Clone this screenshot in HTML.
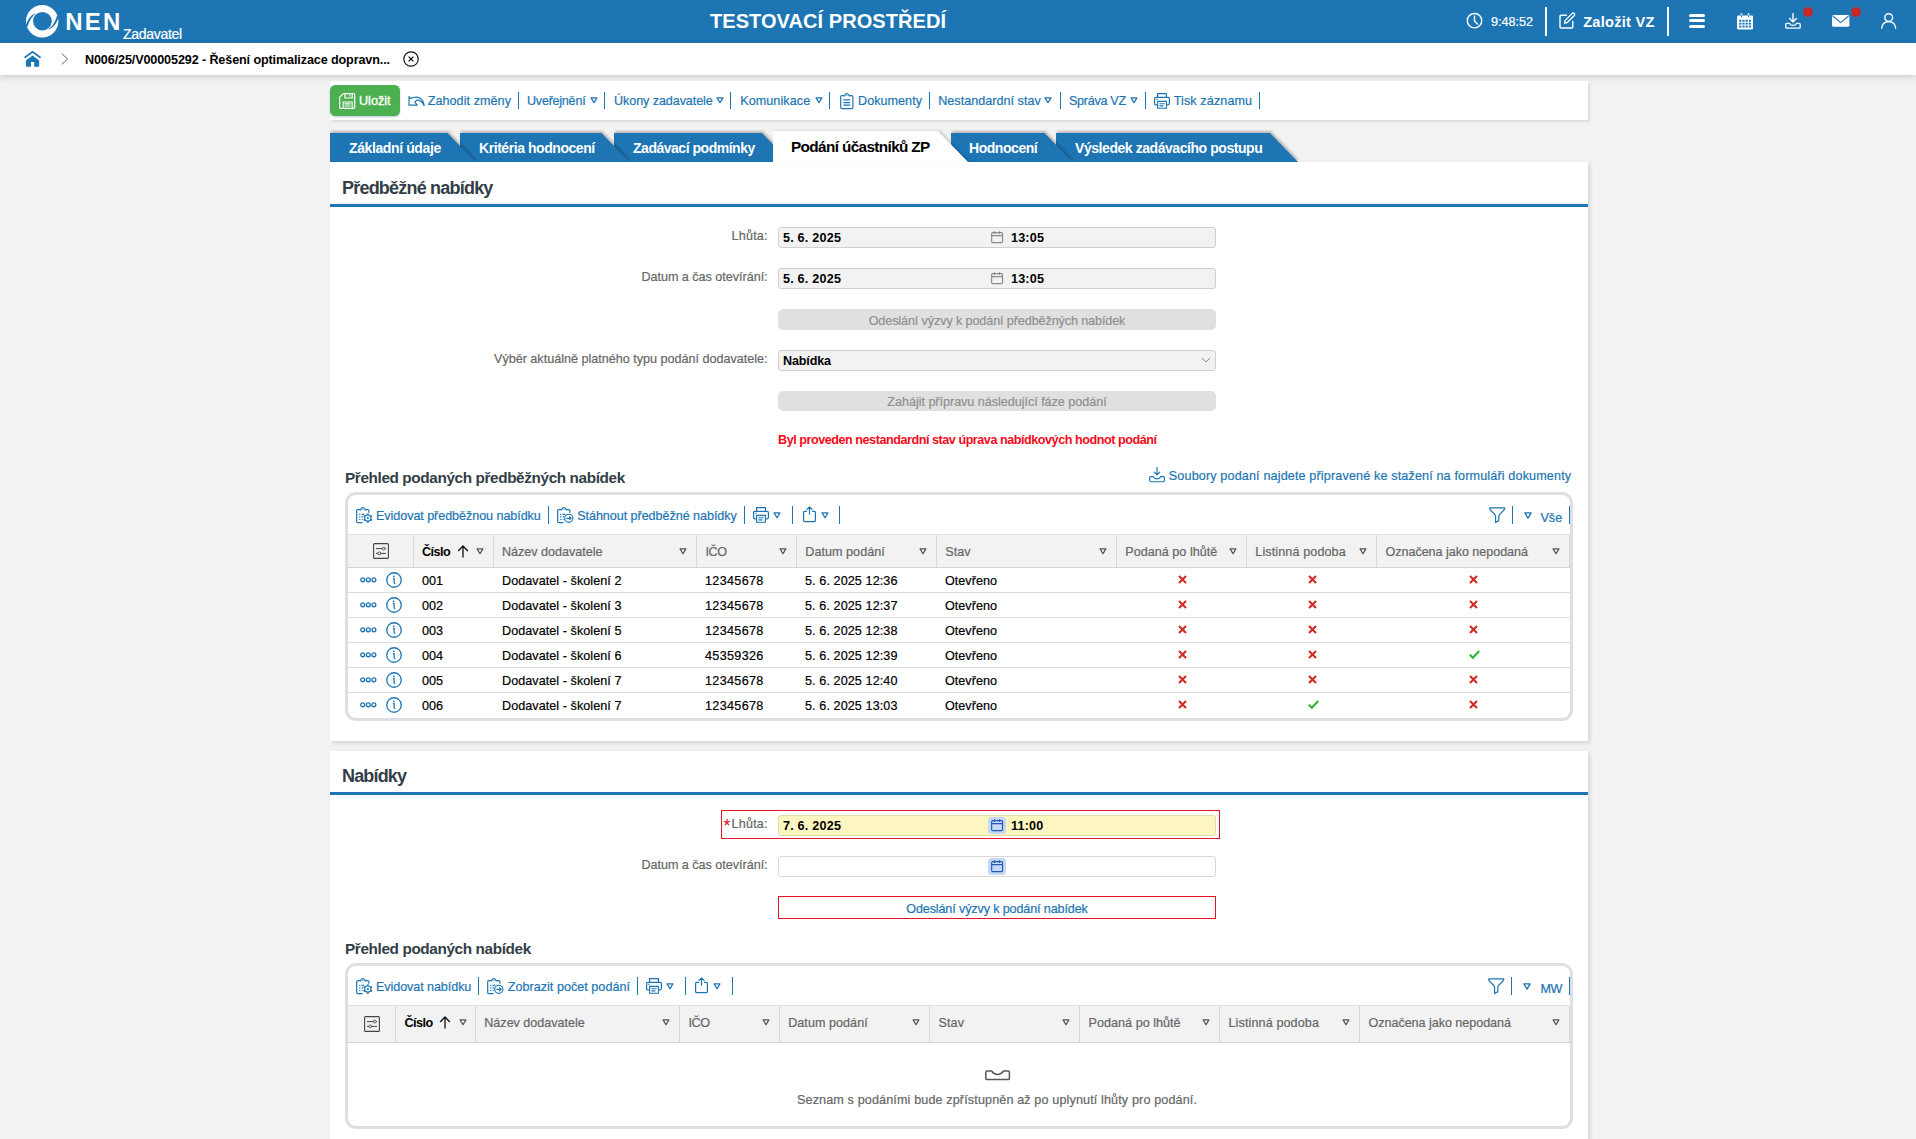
<!DOCTYPE html>
<html lang="cs"><head><meta charset="utf-8"><title>NEN - Zadavatel</title>
<style>
html,body{margin:0;padding:0}
body{width:1916px;height:1139px;overflow:hidden;background:#f2f2f2;position:relative;font-family:"Liberation Sans",Arial,sans-serif;font-size:13px}
div,svg,span{position:absolute;box-sizing:border-box}
span{white-space:pre;line-height:1}
svg{overflow:visible}
</style></head>
<body>
<header>
<div style="left:0px;top:0px;width:1916px;height:43px;background:#1d75b4"></div>
<svg style="left:25.8px;top:4.8px" width="32.4" height="32.4" viewBox="0 0 32.4 32.4" ><circle cx="16.2" cy="16.2" r="16.2" fill="#fff"/><circle cx="16.4" cy="16.2" r="9.3" fill="#1d75b4"/><path d="M-0.3 21.2 C1.6 13.6 5.6 9.2 10.6 7.9 C6.6 10.6 3.6 14.8 1.6 21.6 Z" fill="#1d75b4"/><path d="M-0.3 21.2 C1.6 13.6 5.6 9.2 10.6 7.9 C6.6 10.6 3.6 14.8 1.6 21.6 Z" fill="#1d75b4" transform="rotate(180 16.3 16.2)"/></svg>
<span style="left:65.30px;top:10px;font-size:24px;color:#fff;font-weight:700;letter-spacing:2.200px;">NEN</span>
<span style="left:123px;top:27px;font-size:14px;color:#fff;letter-spacing:-0.292px;-webkit-text-stroke:0.2px #fff;">Zadavatel</span>
<span style="left:710px;top:11px;font-size:20px;color:#fff;font-weight:700;letter-spacing:0.062px;">TESTOVACÍ PROSTŘEDÍ</span>
<svg style="left:1466px;top:12px" width="17" height="17" viewBox="0 0 17 17" ><circle cx="8.5" cy="8.7" r="7.2" fill="none" stroke="#fff" stroke-width="1.4"/><path d="M8.5 4.3 V9 L11.3 12" fill="none" stroke="#fff" stroke-width="1.4" stroke-linecap="round"/></svg>
<span style="left:1491px;top:16px;font-size:12.6px;color:#fff;letter-spacing:-0.005px;-webkit-text-stroke:0.2px #fff;">9:48:52</span>
<div style="left:1545px;top:7px;width:2.2px;height:29px;background:#fff"></div>
<svg style="left:1559px;top:12px" width="17" height="17" viewBox="0 0 17 17" ><path d="M8 3.2 H2.2 Q1 3.2 1 4.4 V14.8 Q1 16 2.2 16 H12.6 Q13.8 16 13.8 14.8 V9" fill="none" stroke="#fff" stroke-width="1.4"/><path d="M6.2 8.4 L13.2 1.4 Q14.2 0.6 15.2 1.5 Q16.2 2.5 15.3 3.5 L8.3 10.5 L5.6 11.2 Z" fill="none" stroke="#fff" stroke-width="1.3" stroke-linejoin="round"/></svg>
<span style="left:1583.20px;top:15px;font-size:14.6px;color:#fff;font-weight:700;letter-spacing:0.250px;">Založit VZ</span>
<div style="left:1666.8px;top:7px;width:2.2px;height:29px;background:#fff"></div>
<div style="left:1689px;top:14.2px;width:16px;height:3px;background:#fff;border-radius:1.5px"></div>
<div style="left:1689px;top:19.2px;width:16px;height:3px;background:#fff;border-radius:1.5px"></div>
<div style="left:1689px;top:24.6px;width:16px;height:3px;background:#fff;border-radius:1.5px"></div>
<svg style="left:1736.5px;top:12.5px" width="16" height="17" viewBox="0 0 16 17" ><path d="M1.2 2.6 H14.8 Q16 2.6 16 3.8 V15.6 Q16 16.6 14.8 16.6 H1.2 Q0 16.6 0 15.6 V3.8 Q0 2.6 1.2 2.6 Z" fill="#fff"/><rect x="3.6" y="0.3" width="1.6" height="4" fill="#fff"/><rect x="10.8" y="0.3" width="1.6" height="4" fill="#fff"/><g fill="#1d75b4"><rect x="3.9" y="1.9" width="1" height="2.4"/><rect x="11.1" y="1.9" width="1" height="2.4"/><rect x="2.2" y="6.8" width="2.2" height="1.9"/><rect x="5.4" y="6.8" width="2.2" height="1.9"/><rect x="8.6" y="6.8" width="2.2" height="1.9"/><rect x="11.8" y="6.8" width="2.2" height="1.9"/><rect x="2.2" y="9.7" width="2.2" height="1.9"/><rect x="5.4" y="9.7" width="2.2" height="1.9"/><rect x="8.6" y="9.7" width="2.2" height="1.9"/><rect x="11.8" y="9.7" width="2.2" height="1.9"/><rect x="2.2" y="12.6" width="2.2" height="1.9"/><rect x="5.4" y="12.6" width="2.2" height="1.9"/><rect x="8.6" y="12.6" width="2.2" height="1.9"/><rect x="11.8" y="12.6" width="2.2" height="1.9"/></g></svg>
<svg style="left:1784.5px;top:13px" width="16" height="16" viewBox="0 0 16 16" ><path d="M8 0.6 V8.6 M4.6 5.6 L8 9 L11.4 5.6" fill="none" stroke="#fff" stroke-width="1.4" stroke-linecap="round" stroke-linejoin="round"/><path d="M4.6 10.4 H1.8 Q0.8 10.4 0.8 11.4 V14.2 Q0.8 15.2 1.8 15.2 H14.2 Q15.2 15.2 15.2 14.2 V11.4 Q15.2 10.4 14.2 10.4 H11.4 Q10.8 12.4 8 12.4 Q5.2 12.4 4.6 10.4 Z" fill="none" stroke="#fff" stroke-width="1.3" stroke-linejoin="round"/></svg>
<div style="left:1802.6px;top:7px;width:10px;height:10px;background:#c62828;border-radius:50%"></div>
<svg style="left:1831.5px;top:15px" width="17.4" height="11.8" viewBox="0 0 17.4 11.8" ><rect x="0" y="0" width="17.4" height="11.8" rx="1.6" fill="#fff"/><path d="M0.8 1 L8.7 7.6 L16.6 1" fill="none" stroke="#1d75b4" stroke-width="1.1"/></svg>
<div style="left:1850.6px;top:7px;width:10px;height:10px;background:#c62828;border-radius:50%"></div>
<svg style="left:1880.5px;top:13px" width="15.4" height="16" viewBox="0 0 15.4 16" ><circle cx="7.7" cy="4.6" r="3.9" fill="none" stroke="#fff" stroke-width="1.4"/><path d="M0.7 15.8 C0.9 10 4.4 8.6 7.7 8.6 C11 8.6 14.5 10 14.7 15.8" fill="none" stroke="#fff" stroke-width="1.4"/></svg>
</header>
<nav aria-label="Drobečková navigace">
<div style="left:0px;top:43px;width:1916px;height:32px;background:#fff;box-shadow:0 2px 6px rgba(0,0,0,.16)"></div>
<svg style="left:23.5px;top:51px" width="17" height="16" viewBox="0 0 17 16" ><path d="M1.1 6.3 L8.55 0.9 L16 6.3" fill="none" stroke="#1d75b4" stroke-width="1.7" stroke-linejoin="miter" stroke-linecap="round"/><path d="M1.9 9.5 L8.55 4.4 L15.2 9.5 V14.8 Q15.2 15.7 14.3 15.7 H10.2 V11 H7 V15.7 H2.8 Q1.9 15.7 1.9 14.8 Z" fill="#1d75b4"/></svg>
<svg style="left:61px;top:53px" width="8" height="12" viewBox="0 0 8 12" ><path d="M0.8 0.6 L6.6 6 L0.8 11.4" fill="none" stroke="#5a5a66" stroke-width="0.95"/></svg>
<span style="left:85px;top:54px;font-size:12.6px;color:#000;font-weight:700;letter-spacing:-0.117px;">N006/25/V00005292 - Řešení optimalizace dopravn...</span>
<svg style="left:403px;top:51px" width="16" height="16" viewBox="0 0 16 16" ><circle cx="8" cy="8" r="7.2" fill="none" stroke="#111" stroke-width="1.2"/><path d="M5.6 5.6 L10.4 10.4 M10.4 5.6 L5.6 10.4" stroke="#111" stroke-width="1.3"/></svg>
</nav>
<main>
<section role="toolbar">
<div style="left:330px;top:81px;width:1258px;height:39px;background:#fff;box-shadow:1.5px 1.5px 3px rgba(0,0,0,.12)"></div>
<div style="left:330.3px;top:85px;width:69.4px;height:30.6px;background:#4caf50;border-radius:5.5px;box-shadow:0 1px 2px rgba(60,90,140,.35)"></div>
<svg style="left:338.8px;top:93px" width="16.4" height="16" viewBox="0 0 16.4 16" ><path d="M4.2 0.6 H14.6 Q15.7 0.6 15.7 1.7 V14.3 Q15.7 15.4 14.6 15.4 H1.8 Q0.7 15.4 0.7 14.3 V4.2 Z" fill="none" stroke="#fff" stroke-width="1.2" stroke-linejoin="round"/><path d="M6 0.8 V5 H13.2 V0.8 M10.8 1.8 V3.6" fill="none" stroke="#fff" stroke-width="1.2"/><path d="M4.2 15.2 V9 H13.2 V15.2 M5.6 10.9 H11.6 M5.6 13 H11.6" fill="none" stroke="#fff" stroke-width="1.1"/></svg>
<span style="left:359px;top:95px;font-size:12.6px;color:#fff;letter-spacing:0.018px;-webkit-text-stroke:0.35px #fff;">Uložit</span>
<svg style="left:407.5px;top:96.3px" width="17" height="10.4" viewBox="0 0 17 10.4" ><path d="M16.2 9.7 C16 5.2 13.2 1.3 8.8 1.1 C6.6 1 4.6 1.5 3 2.5 L1 0.7 V9.2 H9.2 L6.9 6.2 L8.6 4.1 C11.8 3.8 14.4 5.4 16.2 9.7 Z" fill="none" stroke="#1c75b3" stroke-width="1.15" stroke-linejoin="round"/></svg>
<span style="left:427.70px;top:95px;font-size:12.6px;color:#1c75b3;letter-spacing:0.055px;-webkit-text-stroke:0.2px #1c75b3;">Zahodit změny</span>
<div style="left:518px;top:92px;width:1.4px;height:16.5px;background:#1c75b3"></div>
<span style="left:527px;top:95px;font-size:12.6px;color:#1c75b3;letter-spacing:-0.253px;-webkit-text-stroke:0.2px #1c75b3;">Uveřejnění</span>
<svg style="left:590px;top:97.4px" width="8" height="7" viewBox="0 0 8 7" ><path d="M1.1 0.9 H6.9 L4 5.7 Z" fill="none" stroke="#1c75b3" stroke-width="1.25" stroke-linejoin="round"/></svg>
<div style="left:604px;top:92px;width:1.4px;height:16.5px;background:#1c75b3"></div>
<span style="left:614px;top:95px;font-size:12.6px;color:#1c75b3;letter-spacing:-0.085px;-webkit-text-stroke:0.2px #1c75b3;">Úkony zadavatele</span>
<svg style="left:716px;top:97.4px" width="8" height="7" viewBox="0 0 8 7" ><path d="M1.1 0.9 H6.9 L4 5.7 Z" fill="none" stroke="#1c75b3" stroke-width="1.25" stroke-linejoin="round"/></svg>
<div style="left:730px;top:92px;width:1.4px;height:16.5px;background:#1c75b3"></div>
<span style="left:740.20px;top:95px;font-size:12.6px;color:#1c75b3;letter-spacing:0.072px;-webkit-text-stroke:0.2px #1c75b3;">Komunikace</span>
<svg style="left:814.5px;top:97.4px" width="8" height="7" viewBox="0 0 8 7" ><path d="M1.1 0.9 H6.9 L4 5.7 Z" fill="none" stroke="#1c75b3" stroke-width="1.25" stroke-linejoin="round"/></svg>
<div style="left:829px;top:92px;width:1.4px;height:16.5px;background:#1c75b3"></div>
<svg style="left:839.5px;top:92.5px" width="13.6" height="16.4" viewBox="0 0 13.6 16.4" ><path d="M4.2 2.6 H1.8 Q0.7 2.6 0.7 3.7 V14.6 Q0.7 15.7 1.8 15.7 H11.8 Q12.9 15.7 12.9 14.6 V3.7 Q12.9 2.6 11.8 2.6 H9.4" fill="none" stroke="#1c75b3" stroke-width="1.2"/><path d="M3.9 3.2 Q4.6 2.9 4.9 2 Q5.5 0.6 6.8 0.6 Q8.1 0.6 8.7 2 Q9 2.9 9.7 3.2" fill="none" stroke="#1c75b3" stroke-width="1.15"/><circle cx="6.8" cy="2.5" r="0.55" fill="#1c75b3"/><path d="M3.4 6.9 H10.2 M3.4 9.6 H10.2 M3.4 12.2 H10.2" stroke="#1c75b3" stroke-width="1.25"/></svg>
<span style="left:858px;top:95px;font-size:12.6px;color:#1c75b3;letter-spacing:0.035px;-webkit-text-stroke:0.2px #1c75b3;">Dokumenty</span>
<div style="left:929px;top:92px;width:1.4px;height:16.5px;background:#1c75b3"></div>
<span style="left:938.20px;top:95px;font-size:12.6px;color:#1c75b3;letter-spacing:0.023px;-webkit-text-stroke:0.2px #1c75b3;">Nestandardní stav</span>
<svg style="left:1044.4px;top:97.4px" width="8" height="7" viewBox="0 0 8 7" ><path d="M1.1 0.9 H6.9 L4 5.7 Z" fill="none" stroke="#1c75b3" stroke-width="1.25" stroke-linejoin="round"/></svg>
<div style="left:1060px;top:92px;width:1.4px;height:16.5px;background:#1c75b3"></div>
<span style="left:1069px;top:95px;font-size:12.6px;color:#1c75b3;letter-spacing:-0.294px;-webkit-text-stroke:0.2px #1c75b3;">Správa VZ</span>
<svg style="left:1130px;top:97.4px" width="8" height="7" viewBox="0 0 8 7" ><path d="M1.1 0.9 H6.9 L4 5.7 Z" fill="none" stroke="#1c75b3" stroke-width="1.25" stroke-linejoin="round"/></svg>
<div style="left:1145px;top:92px;width:1.4px;height:16.5px;background:#1c75b3"></div>
<svg style="left:1154px;top:93px" width="16" height="16" viewBox="0 0 16 16" ><path d="M3.6 4.4 V0.7 H12.4 V4.4" fill="none" stroke="#1c75b3" stroke-width="1.2"/><path d="M3.6 11.8 H1.8 Q0.6 11.8 0.6 10.6 V5.6 Q0.6 4.4 1.8 4.4 H14.2 Q15.4 4.4 15.4 5.6 V10.6 Q15.4 11.8 14.2 11.8 H12.4" fill="none" stroke="#1c75b3" stroke-width="1.2"/><path d="M3.6 8.4 H12.4 V15.3 H3.6 Z M5.4 10.7 H10.6 M5.4 12.9 H9.4 M2.4 6.4 H3.6" fill="none" stroke="#1c75b3" stroke-width="1.1"/></svg>
<span style="left:1173.70px;top:95px;font-size:12.6px;color:#1c75b3;letter-spacing:0.111px;-webkit-text-stroke:0.2px #1c75b3;">Tisk záznamu</span>
<div style="left:1259px;top:92px;width:1.4px;height:16.5px;background:#1c75b3"></div>
</section>
<nav role="tablist">
<svg style="left:1056px;top:133px;filter:drop-shadow(1.2px -1.2px 1px rgba(20,10,0,.24))" width="242" height="29" viewBox="0 0 242 29"><polygon points="0,0 214,0 242,29 0,29" fill="#1d75b4"/></svg>
<svg style="left:951px;top:133px;filter:drop-shadow(1.2px -1.2px 1px rgba(20,10,0,.24))" width="121.5" height="29" viewBox="0 0 121.5 29"><polygon points="0,0 93.5,0 121.5,29 0,29" fill="#1d75b4"/></svg>
<svg style="left:613.5px;top:133px;filter:drop-shadow(1.2px -1.2px 1px rgba(20,10,0,.24))" width="176" height="29" viewBox="0 0 176 29"><polygon points="0,0 148,0 176,29 0,29" fill="#1d75b4"/></svg>
<svg style="left:460px;top:133px;filter:drop-shadow(1.2px -1.2px 1px rgba(20,10,0,.24))" width="169.5" height="29" viewBox="0 0 169.5 29"><polygon points="0,0 141.5,0 169.5,29 0,29" fill="#1d75b4"/></svg>
<svg style="left:330px;top:133px;filter:drop-shadow(1.2px -1.2px 1px rgba(20,10,0,.24))" width="145.5" height="29" viewBox="0 0 145.5 29"><polygon points="0,0 117.5,0 145.5,29 0,29" fill="#1d75b4"/></svg>
<svg style="left:773px;top:131px;filter:drop-shadow(2px 0px 1.5px rgba(0,0,0,.2))" width="195" height="31" viewBox="0 0 195 31"><polygon points="0,0 165,0 195,31 0,31" fill="#fff"/></svg>
<span style="left:1075px;top:141px;font-size:14px;color:#fff;font-weight:700;letter-spacing:-0.440px;">Výsledek zadávacího postupu</span>
<span style="left:969px;top:141px;font-size:14px;color:#fff;font-weight:700;letter-spacing:-0.452px;">Hodnocení</span>
<span style="left:633px;top:141px;font-size:14px;color:#fff;font-weight:700;letter-spacing:-0.481px;">Zadávací podmínky</span>
<span style="left:479px;top:141px;font-size:14px;color:#fff;font-weight:700;letter-spacing:-0.439px;">Kritéria hodnocení</span>
<span style="left:349px;top:141px;font-size:14px;color:#fff;font-weight:700;letter-spacing:-0.389px;">Základní údaje</span>
<span style="left:791px;top:139px;font-size:15.3px;color:#000;font-weight:700;letter-spacing:-0.619px;">Podání účastníků ZP</span>
</nav>
<section>
<div style="left:330px;top:162px;width:1258px;height:578.8px;background:#fff;box-shadow:2px 2px 4px rgba(0,0,0,.13)"></div>
<span style="left:342px;top:179px;font-size:18px;color:#333e47;font-weight:700;letter-spacing:-0.792px;">Předběžné nabídky</span>
<div style="left:330px;top:204px;width:1258px;height:3px;background:#1d75b4"></div>
<span style="left:731.60px;top:230px;font-size:12.6px;color:#666666;letter-spacing:0.179px;-webkit-text-stroke:0.2px #666666;">Lhůta:</span>
<div style="left:778px;top:227px;width:438px;height:21px;background:#f2f2f2;border:1px solid #cfcfcf;border-radius:3px"></div>
<span style="left:783px;top:232px;font-size:12.6px;color:#000;font-weight:700;letter-spacing:0.207px;">5. 6. 2025</span>
<svg style="left:990.6px;top:230.8px" width="12.4" height="12.4" viewBox="0 0 12.4 12.4" ><rect x="0.65" y="1.7" width="10.9" height="9.9" rx="1.1" fill="none" stroke="#8a8a8a" stroke-width="1.15"/><path d="M0.65 4.7 H11.55 M3.5 0.3 V2.9 M8.5 0.3 V2.9" stroke="#8a8a8a" stroke-width="1.15" fill="none"/></svg>
<span style="left:1011px;top:232px;font-size:12.6px;color:#000;font-weight:700;letter-spacing:0.174px;">13:05</span>
<span style="left:641.40px;top:271px;font-size:12.6px;color:#666666;letter-spacing:-0.023px;-webkit-text-stroke:0.2px #666666;">Datum a čas otevírání:</span>
<div style="left:778px;top:268px;width:438px;height:21px;background:#f2f2f2;border:1px solid #cfcfcf;border-radius:3px"></div>
<span style="left:783px;top:273px;font-size:12.6px;color:#000;font-weight:700;letter-spacing:0.207px;">5. 6. 2025</span>
<svg style="left:990.6px;top:271.8px" width="12.4" height="12.4" viewBox="0 0 12.4 12.4" ><rect x="0.65" y="1.7" width="10.9" height="9.9" rx="1.1" fill="none" stroke="#8a8a8a" stroke-width="1.15"/><path d="M0.65 4.7 H11.55 M3.5 0.3 V2.9 M8.5 0.3 V2.9" stroke="#8a8a8a" stroke-width="1.15" fill="none"/></svg>
<span style="left:1011px;top:273px;font-size:12.6px;color:#000;font-weight:700;letter-spacing:0.174px;">13:05</span>
<div style="left:778px;top:309px;width:438px;height:21px;background:#e0e0e0;border-radius:5px"></div>
<span style="left:868.65px;top:315px;font-size:12.6px;color:#8f8f8f;letter-spacing:-0.104px;-webkit-text-stroke:0.2px #8f8f8f;">Odeslání výzvy k podání předběžných nabídek</span>
<span style="left:494px;top:353px;font-size:12.6px;color:#666666;letter-spacing:-0.004px;-webkit-text-stroke:0.2px #666666;">Výběr aktuálně platného typu podání dodavatele:</span>
<div style="left:778px;top:350px;width:438px;height:21px;background:#f2f2f2;border:1px solid #cfcfcf;border-radius:3px"></div>
<span style="left:783px;top:355px;font-size:12.6px;color:#000;font-weight:700;letter-spacing:-0.154px;">Nabídka</span>
<svg style="left:1200.5px;top:357px" width="10" height="6" viewBox="0 0 10 6" ><path d="M0.8 0.8 L5 5 L9.2 0.8" fill="none" stroke="#8a8a8a" stroke-width="1"/></svg>
<div style="left:778px;top:391px;width:438px;height:19.6px;background:#e0e0e0;border-radius:5px"></div>
<span style="left:887.35px;top:396px;font-size:12.6px;color:#8f8f8f;letter-spacing:-0.031px;-webkit-text-stroke:0.2px #8f8f8f;">Zahájit přípravu následující fáze podání</span>
<span style="left:778px;top:434px;font-size:12.6px;color:#f50a1a;font-weight:700;letter-spacing:-0.457px;">Byl proveden nestandardní stav úprava nabídkových hodnot podání</span>
<span style="left:345px;top:470px;font-size:15.3px;color:#333e47;font-weight:700;letter-spacing:-0.374px;">Přehled podaných předběžných nabídek</span>
<svg style="left:1148.9px;top:467.2px" width="16.2" height="15.5" viewBox="0 0 16.2 15.5" ><path d="M8 0.5 V7.8 M5.2 5.1 L8 7.9 L10.8 5.1" fill="none" stroke="#1c75b3" stroke-width="1.2" stroke-linecap="round" stroke-linejoin="round"/><path d="M4.4 9.6 H1.9 Q0.7 9.6 0.7 10.8 V13.6 Q0.7 14.8 1.9 14.8 H14.2 Q15.4 14.8 15.4 13.6 V10.8 Q15.4 9.6 14.2 9.6 H11.6 Q10.8 11.9 8 11.9 Q5.2 11.9 4.4 9.6 Z" fill="none" stroke="#1c75b3" stroke-width="1.15" stroke-linejoin="round"/></svg>
<span style="left:1168.80px;top:470px;font-size:12.6px;color:#1c75b3;letter-spacing:0.145px;-webkit-text-stroke:0.2px #1c75b3;">Soubory podaní najdete připravené ke stažení na formuláři dokumenty</span>
<div style="left:345px;top:492px;width:1228px;height:229px;border:3px solid #dddfe2;border-bottom-width:3.8px;border-radius:11px;background:#fff"></div>
<svg style="left:355.6px;top:506.5px" width="17" height="16.5" viewBox="0 0 17 16.5" ><path d="M4.2 2.6 H1.8 Q0.7 2.6 0.7 3.7 V14.6 Q0.7 15.7 1.8 15.7 H6.6 M9.4 2.6 H11.8 Q12.9 2.6 12.9 3.7 V5.8" fill="none" stroke="#1c75b3" stroke-width="1.2"/><path d="M3.9 3.2 Q4.6 2.9 4.9 2 Q5.5 0.6 6.8 0.6 Q8.1 0.6 8.7 2 Q9 2.9 9.7 3.2" fill="none" stroke="#1c75b3" stroke-width="1.15"/><circle cx="6.8" cy="2.5" r="0.55" fill="#1c75b3"/><path d="M3.2 7.3 H4.4 M5.6 7.3 H8.2 M3.2 9.9 H4.4 M5.6 9.9 H7 M3.2 12.5 H4.4 M5.6 12.5 H6.6" stroke="#1c75b3" stroke-width="1.2"/><g transform="translate(11.8 11.1)"><path d="M0 -3.2 V-4.7" transform="rotate(0)" stroke="#1c75b3" stroke-width="2" stroke-linecap="butt"/><path d="M0 -3.2 V-4.7" transform="rotate(60)" stroke="#1c75b3" stroke-width="2" stroke-linecap="butt"/><path d="M0 -3.2 V-4.7" transform="rotate(120)" stroke="#1c75b3" stroke-width="2" stroke-linecap="butt"/><path d="M0 -3.2 V-4.7" transform="rotate(180)" stroke="#1c75b3" stroke-width="2" stroke-linecap="butt"/><path d="M0 -3.2 V-4.7" transform="rotate(240)" stroke="#1c75b3" stroke-width="2" stroke-linecap="butt"/><path d="M0 -3.2 V-4.7" transform="rotate(300)" stroke="#1c75b3" stroke-width="2" stroke-linecap="butt"/><circle r="3.1" fill="#fff" stroke="#1c75b3" stroke-width="1.15"/><circle r="1.1" fill="#1c75b3"/></g></svg>
<span style="left:376px;top:510px;font-size:12.6px;color:#1c75b3;letter-spacing:-0.069px;-webkit-text-stroke:0.2px #1c75b3;">Evidovat předběžnou nabídku</span>
<div style="left:548px;top:506px;width:1.4px;height:17.8px;background:#1c75b3"></div>
<svg style="left:557px;top:506.5px" width="17" height="16.5" viewBox="0 0 17 16.5" ><path d="M4.2 2.6 H1.8 Q0.7 2.6 0.7 3.7 V14.6 Q0.7 15.7 1.8 15.7 H6.6 M9.4 2.6 H11.8 Q12.9 2.6 12.9 3.7 V5.8" fill="none" stroke="#1c75b3" stroke-width="1.2"/><path d="M3.9 3.2 Q4.6 2.9 4.9 2 Q5.5 0.6 6.8 0.6 Q8.1 0.6 8.7 2 Q9 2.9 9.7 3.2" fill="none" stroke="#1c75b3" stroke-width="1.15"/><circle cx="6.8" cy="2.5" r="0.55" fill="#1c75b3"/><path d="M3.2 7.3 H4.4 M5.6 7.3 H8.2 M3.2 9.9 H4.4 M5.6 9.9 H7 M3.2 12.5 H4.4 M5.6 12.5 H6.6" stroke="#1c75b3" stroke-width="1.2"/><circle cx="11.8" cy="11.3" r="4.1" fill="#fff" stroke="#1c75b3" stroke-width="1.15"/><path d="M9.4 11.3 H14 M12.2 9.5 L14.1 11.3 L12.2 13.1" fill="none" stroke="#1c75b3" stroke-width="1.15"/></svg>
<span style="left:577.20px;top:510px;font-size:12.6px;color:#1c75b3;letter-spacing:-0.057px;-webkit-text-stroke:0.2px #1c75b3;">Stáhnout předběžné nabídky</span>
<div style="left:744px;top:506px;width:1.4px;height:17.8px;background:#1c75b3"></div>
<svg style="left:753px;top:507.1px" width="16" height="16" viewBox="0 0 16 16" ><path d="M3.6 4.4 V0.7 H12.4 V4.4" fill="none" stroke="#1c75b3" stroke-width="1.2"/><path d="M3.6 11.8 H1.8 Q0.6 11.8 0.6 10.6 V5.6 Q0.6 4.4 1.8 4.4 H14.2 Q15.4 4.4 15.4 5.6 V10.6 Q15.4 11.8 14.2 11.8 H12.4" fill="none" stroke="#1c75b3" stroke-width="1.2"/><path d="M3.6 8.4 H12.4 V15.3 H3.6 Z M5.4 10.7 H10.6 M5.4 12.9 H9.4 M2.4 6.4 H3.6" fill="none" stroke="#1c75b3" stroke-width="1.1"/></svg>
<svg style="left:773.2px;top:511.6px" width="8" height="7" viewBox="0 0 8 7" ><path d="M1.1 0.9 H6.9 L4 5.7 Z" fill="none" stroke="#1c75b3" stroke-width="1.25" stroke-linejoin="round"/></svg>
<div style="left:792px;top:506px;width:1.4px;height:17.8px;background:#1c75b3"></div>
<svg style="left:802.7px;top:506.4px" width="13" height="16.2" viewBox="0 0 13 16.2" ><path d="M4 5.4 H1.6 Q0.6 5.4 0.6 6.4 V14.6 Q0.6 15.6 1.6 15.6 H11.4 Q12.4 15.6 12.4 14.6 V6.4 Q12.4 5.4 11.4 5.4 H9" fill="none" stroke="#1c75b3" stroke-width="1.2"/><path d="M6.5 8.2 V1 M4 3.4 L6.5 0.9 L9 3.4" fill="none" stroke="#1c75b3" stroke-width="1.2" stroke-linejoin="round" stroke-linecap="round"/></svg>
<svg style="left:820.8px;top:511.6px" width="8" height="7" viewBox="0 0 8 7" ><path d="M1.1 0.9 H6.9 L4 5.7 Z" fill="none" stroke="#1c75b3" stroke-width="1.25" stroke-linejoin="round"/></svg>
<div style="left:839px;top:506px;width:1.4px;height:17.8px;background:#1c75b3"></div>
<svg style="left:1488.6px;top:506.6px" width="16.4" height="16.4" viewBox="0 0 16.4 16.4" ><path d="M1.2 0.8 H15.2 Q16.1 0.8 15.7 1.8 C14.6 5 10.2 6.2 9.8 9 V13.8 L6.6 15.4 V9 C6.2 6.2 1.8 5 0.7 1.8 Q0.3 0.8 1.2 0.8 Z" fill="none" stroke="#1c75b3" stroke-width="1.2" stroke-linejoin="round"/></svg>
<div style="left:1512px;top:506px;width:1.4px;height:17.8px;background:#1c75b3"></div>
<svg style="left:1524.4px;top:512.2px" width="8" height="7" viewBox="0 0 8 7" ><path d="M0.9 0.8 H7.1 L4 6.1 Z" fill="none" stroke="#1c75b3" stroke-width="1.3" stroke-linejoin="round"/></svg>
<span style="left:1540.40px;top:512px;font-size:12.6px;color:#1c75b3;letter-spacing:0.039px;-webkit-text-stroke:0.2px #1c75b3;">Vše</span>
<div style="left:1569px;top:506px;width:1.4px;height:17.8px;background:#1c75b3"></div>
<div style="left:348px;top:534px;width:1222px;height:34px;background:#f2f2f2;border-top:1px solid #e3e3e3;border-bottom:1.3px solid #d2d2d2"></div>
<svg style="left:373.1px;top:543px" width="16" height="16" viewBox="0 0 16 16" ><rect x="0.6" y="0.6" width="14.8" height="14.8" rx="1" fill="none" stroke="#444" stroke-width="1.1"/><path d="M3 5.6 H9.4 M12 5.6 H13 M3 10.4 H5 M7.6 10.4 H13" stroke="#444" stroke-width="1"/><circle cx="10.7" cy="5.6" r="1.4" fill="none" stroke="#444" stroke-width="0.9"/><circle cx="6.3" cy="10.4" r="1.4" fill="none" stroke="#444" stroke-width="0.9"/></svg>
<div style="left:412.5px;top:535px;width:1px;height:32px;background:#d9d9d9"></div>
<span style="left:422px;top:546px;font-size:12.6px;color:#000;font-weight:700;letter-spacing:-0.533px;">Číslo</span>
<svg style="left:456.6px;top:544.5px" width="12" height="13" viewBox="0 0 12 13" ><path d="M6 12.4 V1.2 M1.2 6 L6 1 L10.8 6" fill="none" stroke="#111" stroke-width="1.3"/></svg>
<svg style="left:476px;top:548px" width="8" height="7" viewBox="0 0 8 7" ><path d="M1.1 0.9 H6.9 L4 5.7 Z" fill="none" stroke="#555" stroke-width="1.25" stroke-linejoin="round"/></svg>
<div style="left:492.5px;top:535px;width:1px;height:32px;background:#d9d9d9"></div>
<span style="left:502px;top:546px;font-size:12.6px;color:#666666;letter-spacing:-0.021px;-webkit-text-stroke:0.2px #666666;">Název dodavatele</span>
<svg style="left:679.2px;top:548px" width="8" height="7" viewBox="0 0 8 7" ><path d="M1.1 0.9 H6.9 L4 5.7 Z" fill="none" stroke="#555" stroke-width="1.25" stroke-linejoin="round"/></svg>
<div style="left:695.9px;top:535px;width:1px;height:32px;background:#d9d9d9"></div>
<span style="left:705.40px;top:546px;font-size:12.6px;color:#666666;letter-spacing:-0.356px;-webkit-text-stroke:0.2px #666666;">IČO</span>
<svg style="left:779.1px;top:548px" width="8" height="7" viewBox="0 0 8 7" ><path d="M1.1 0.9 H6.9 L4 5.7 Z" fill="none" stroke="#555" stroke-width="1.25" stroke-linejoin="round"/></svg>
<div style="left:795.8px;top:535px;width:1px;height:32px;background:#d9d9d9"></div>
<span style="left:805.30px;top:546px;font-size:12.6px;color:#666666;letter-spacing:0.033px;-webkit-text-stroke:0.2px #666666;">Datum podání</span>
<svg style="left:919px;top:548px" width="8" height="7" viewBox="0 0 8 7" ><path d="M1.1 0.9 H6.9 L4 5.7 Z" fill="none" stroke="#555" stroke-width="1.25" stroke-linejoin="round"/></svg>
<div style="left:935.7px;top:535px;width:1px;height:32px;background:#d9d9d9"></div>
<span style="left:945.20px;top:546px;font-size:12.6px;color:#666666;letter-spacing:0.085px;-webkit-text-stroke:0.2px #666666;">Stav</span>
<svg style="left:1099.1px;top:548px" width="8" height="7" viewBox="0 0 8 7" ><path d="M1.1 0.9 H6.9 L4 5.7 Z" fill="none" stroke="#555" stroke-width="1.25" stroke-linejoin="round"/></svg>
<div style="left:1115.8px;top:535px;width:1px;height:32px;background:#d9d9d9"></div>
<span style="left:1125.30px;top:546px;font-size:12.6px;color:#666666;letter-spacing:0.017px;-webkit-text-stroke:0.2px #666666;">Podaná po lhůtě</span>
<svg style="left:1229.1px;top:548px" width="8" height="7" viewBox="0 0 8 7" ><path d="M1.1 0.9 H6.9 L4 5.7 Z" fill="none" stroke="#555" stroke-width="1.25" stroke-linejoin="round"/></svg>
<div style="left:1245.8px;top:535px;width:1px;height:32px;background:#d9d9d9"></div>
<span style="left:1255.30px;top:546px;font-size:12.6px;color:#666666;letter-spacing:0.108px;-webkit-text-stroke:0.2px #666666;">Listinná podoba</span>
<svg style="left:1359.3px;top:548px" width="8" height="7" viewBox="0 0 8 7" ><path d="M1.1 0.9 H6.9 L4 5.7 Z" fill="none" stroke="#555" stroke-width="1.25" stroke-linejoin="round"/></svg>
<div style="left:1376px;top:535px;width:1px;height:32px;background:#d9d9d9"></div>
<span style="left:1385.50px;top:546px;font-size:12.6px;color:#666666;letter-spacing:-0.049px;-webkit-text-stroke:0.2px #666666;">Označena jako nepodaná</span>
<svg style="left:1552.4px;top:548px" width="8" height="7" viewBox="0 0 8 7" ><path d="M1.1 0.9 H6.9 L4 5.7 Z" fill="none" stroke="#555" stroke-width="1.25" stroke-linejoin="round"/></svg>
<div style="left:1569.2px;top:535px;width:1px;height:32px;background:#d9d9d9"></div>
<svg style="left:360px;top:577.4px" width="17" height="5.6" viewBox="0 0 17 5.6" ><circle cx="2.7" cy="2.8" r="1.95" fill="none" stroke="#1c75b3" stroke-width="1.3"/><circle cx="8.3" cy="2.8" r="1.95" fill="none" stroke="#1c75b3" stroke-width="1.3"/><circle cx="13.9" cy="2.8" r="1.95" fill="none" stroke="#1c75b3" stroke-width="1.3"/></svg>
<svg style="left:386px;top:571.9px" width="16" height="16" viewBox="0 0 16 16" ><circle cx="8" cy="8" r="7.25" fill="none" stroke="#1c75b3" stroke-width="1.3"/><path d="M6.9 6.6 H8.1 V10.6 Q8.1 11.6 9.3 11.5" fill="none" stroke="#1c75b3" stroke-width="1.25"/><circle cx="7.8" cy="4.4" r="0.85" fill="#1c75b3"/></svg>
<span style="left:422px;top:575px;font-size:12.6px;color:#000;letter-spacing:-0.006px;-webkit-text-stroke:0.2px #000;">001</span>
<span style="left:502px;top:575px;font-size:12.6px;color:#000;letter-spacing:0.058px;-webkit-text-stroke:0.2px #000;">Dodavatel - školení 2</span>
<span style="left:705px;top:575px;font-size:12.6px;color:#000;letter-spacing:0.327px;-webkit-text-stroke:0.2px #000;">12345678</span>
<span style="left:805px;top:575px;font-size:12.6px;color:#000;letter-spacing:0.094px;-webkit-text-stroke:0.2px #000;">5. 6. 2025 12:36</span>
<span style="left:945px;top:575px;font-size:12.6px;color:#000;letter-spacing:0.025px;-webkit-text-stroke:0.2px #000;">Otevřeno</span>
<svg style="left:1177.7px;top:574.6px" width="9" height="9" viewBox="0 0 9 9" ><path d="M1 1 L8 8 M8 1 L1 8" stroke="#d3291f" stroke-width="2.1" fill="none"/></svg>
<svg style="left:1308.1px;top:574.6px" width="9" height="9" viewBox="0 0 9 9" ><path d="M1 1 L8 8 M8 1 L1 8" stroke="#d3291f" stroke-width="2.1" fill="none"/></svg>
<svg style="left:1469.4px;top:574.6px" width="9" height="9" viewBox="0 0 9 9" ><path d="M1 1 L8 8 M8 1 L1 8" stroke="#d3291f" stroke-width="2.1" fill="none"/></svg>
<div style="left:348px;top:592px;width:1222px;height:1px;background:#dcdcdc"></div>
<svg style="left:360px;top:602.4px" width="17" height="5.6" viewBox="0 0 17 5.6" ><circle cx="2.7" cy="2.8" r="1.95" fill="none" stroke="#1c75b3" stroke-width="1.3"/><circle cx="8.3" cy="2.8" r="1.95" fill="none" stroke="#1c75b3" stroke-width="1.3"/><circle cx="13.9" cy="2.8" r="1.95" fill="none" stroke="#1c75b3" stroke-width="1.3"/></svg>
<svg style="left:386px;top:596.9px" width="16" height="16" viewBox="0 0 16 16" ><circle cx="8" cy="8" r="7.25" fill="none" stroke="#1c75b3" stroke-width="1.3"/><path d="M6.9 6.6 H8.1 V10.6 Q8.1 11.6 9.3 11.5" fill="none" stroke="#1c75b3" stroke-width="1.25"/><circle cx="7.8" cy="4.4" r="0.85" fill="#1c75b3"/></svg>
<span style="left:422px;top:600px;font-size:12.6px;color:#000;letter-spacing:-0.006px;-webkit-text-stroke:0.2px #000;">002</span>
<span style="left:502px;top:600px;font-size:12.6px;color:#000;letter-spacing:0.058px;-webkit-text-stroke:0.2px #000;">Dodavatel - školení 3</span>
<span style="left:705px;top:600px;font-size:12.6px;color:#000;letter-spacing:0.327px;-webkit-text-stroke:0.2px #000;">12345678</span>
<span style="left:805px;top:600px;font-size:12.6px;color:#000;letter-spacing:0.094px;-webkit-text-stroke:0.2px #000;">5. 6. 2025 12:37</span>
<span style="left:945px;top:600px;font-size:12.6px;color:#000;letter-spacing:0.025px;-webkit-text-stroke:0.2px #000;">Otevřeno</span>
<svg style="left:1177.7px;top:599.6px" width="9" height="9" viewBox="0 0 9 9" ><path d="M1 1 L8 8 M8 1 L1 8" stroke="#d3291f" stroke-width="2.1" fill="none"/></svg>
<svg style="left:1308.1px;top:599.6px" width="9" height="9" viewBox="0 0 9 9" ><path d="M1 1 L8 8 M8 1 L1 8" stroke="#d3291f" stroke-width="2.1" fill="none"/></svg>
<svg style="left:1469.4px;top:599.6px" width="9" height="9" viewBox="0 0 9 9" ><path d="M1 1 L8 8 M8 1 L1 8" stroke="#d3291f" stroke-width="2.1" fill="none"/></svg>
<div style="left:348px;top:617px;width:1222px;height:1px;background:#dcdcdc"></div>
<svg style="left:360px;top:627.4px" width="17" height="5.6" viewBox="0 0 17 5.6" ><circle cx="2.7" cy="2.8" r="1.95" fill="none" stroke="#1c75b3" stroke-width="1.3"/><circle cx="8.3" cy="2.8" r="1.95" fill="none" stroke="#1c75b3" stroke-width="1.3"/><circle cx="13.9" cy="2.8" r="1.95" fill="none" stroke="#1c75b3" stroke-width="1.3"/></svg>
<svg style="left:386px;top:621.9px" width="16" height="16" viewBox="0 0 16 16" ><circle cx="8" cy="8" r="7.25" fill="none" stroke="#1c75b3" stroke-width="1.3"/><path d="M6.9 6.6 H8.1 V10.6 Q8.1 11.6 9.3 11.5" fill="none" stroke="#1c75b3" stroke-width="1.25"/><circle cx="7.8" cy="4.4" r="0.85" fill="#1c75b3"/></svg>
<span style="left:422px;top:625px;font-size:12.6px;color:#000;letter-spacing:-0.006px;-webkit-text-stroke:0.2px #000;">003</span>
<span style="left:502px;top:625px;font-size:12.6px;color:#000;letter-spacing:0.058px;-webkit-text-stroke:0.2px #000;">Dodavatel - školení 5</span>
<span style="left:705px;top:625px;font-size:12.6px;color:#000;letter-spacing:0.327px;-webkit-text-stroke:0.2px #000;">12345678</span>
<span style="left:805px;top:625px;font-size:12.6px;color:#000;letter-spacing:0.094px;-webkit-text-stroke:0.2px #000;">5. 6. 2025 12:38</span>
<span style="left:945px;top:625px;font-size:12.6px;color:#000;letter-spacing:0.025px;-webkit-text-stroke:0.2px #000;">Otevřeno</span>
<svg style="left:1177.7px;top:624.6px" width="9" height="9" viewBox="0 0 9 9" ><path d="M1 1 L8 8 M8 1 L1 8" stroke="#d3291f" stroke-width="2.1" fill="none"/></svg>
<svg style="left:1308.1px;top:624.6px" width="9" height="9" viewBox="0 0 9 9" ><path d="M1 1 L8 8 M8 1 L1 8" stroke="#d3291f" stroke-width="2.1" fill="none"/></svg>
<svg style="left:1469.4px;top:624.6px" width="9" height="9" viewBox="0 0 9 9" ><path d="M1 1 L8 8 M8 1 L1 8" stroke="#d3291f" stroke-width="2.1" fill="none"/></svg>
<div style="left:348px;top:642px;width:1222px;height:1px;background:#dcdcdc"></div>
<svg style="left:360px;top:652.4px" width="17" height="5.6" viewBox="0 0 17 5.6" ><circle cx="2.7" cy="2.8" r="1.95" fill="none" stroke="#1c75b3" stroke-width="1.3"/><circle cx="8.3" cy="2.8" r="1.95" fill="none" stroke="#1c75b3" stroke-width="1.3"/><circle cx="13.9" cy="2.8" r="1.95" fill="none" stroke="#1c75b3" stroke-width="1.3"/></svg>
<svg style="left:386px;top:646.9px" width="16" height="16" viewBox="0 0 16 16" ><circle cx="8" cy="8" r="7.25" fill="none" stroke="#1c75b3" stroke-width="1.3"/><path d="M6.9 6.6 H8.1 V10.6 Q8.1 11.6 9.3 11.5" fill="none" stroke="#1c75b3" stroke-width="1.25"/><circle cx="7.8" cy="4.4" r="0.85" fill="#1c75b3"/></svg>
<span style="left:422px;top:650px;font-size:12.6px;color:#000;letter-spacing:-0.006px;-webkit-text-stroke:0.2px #000;">004</span>
<span style="left:502px;top:650px;font-size:12.6px;color:#000;letter-spacing:0.058px;-webkit-text-stroke:0.2px #000;">Dodavatel - školení 6</span>
<span style="left:705px;top:650px;font-size:12.6px;color:#000;letter-spacing:0.327px;-webkit-text-stroke:0.2px #000;">45359326</span>
<span style="left:805px;top:650px;font-size:12.6px;color:#000;letter-spacing:0.094px;-webkit-text-stroke:0.2px #000;">5. 6. 2025 12:39</span>
<span style="left:945px;top:650px;font-size:12.6px;color:#000;letter-spacing:0.025px;-webkit-text-stroke:0.2px #000;">Otevřeno</span>
<svg style="left:1177.7px;top:649.6px" width="9" height="9" viewBox="0 0 9 9" ><path d="M1 1 L8 8 M8 1 L1 8" stroke="#d3291f" stroke-width="2.1" fill="none"/></svg>
<svg style="left:1308.1px;top:649.6px" width="9" height="9" viewBox="0 0 9 9" ><path d="M1 1 L8 8 M8 1 L1 8" stroke="#d3291f" stroke-width="2.1" fill="none"/></svg>
<svg style="left:1468.8px;top:649.6px" width="11" height="9" viewBox="0 0 11 9" ><path d="M0.8 4.8 L3.9 7.8 L10.2 1" stroke="#2fb52f" stroke-width="2.1" fill="none"/></svg>
<div style="left:348px;top:667px;width:1222px;height:1px;background:#dcdcdc"></div>
<svg style="left:360px;top:677.4px" width="17" height="5.6" viewBox="0 0 17 5.6" ><circle cx="2.7" cy="2.8" r="1.95" fill="none" stroke="#1c75b3" stroke-width="1.3"/><circle cx="8.3" cy="2.8" r="1.95" fill="none" stroke="#1c75b3" stroke-width="1.3"/><circle cx="13.9" cy="2.8" r="1.95" fill="none" stroke="#1c75b3" stroke-width="1.3"/></svg>
<svg style="left:386px;top:671.9px" width="16" height="16" viewBox="0 0 16 16" ><circle cx="8" cy="8" r="7.25" fill="none" stroke="#1c75b3" stroke-width="1.3"/><path d="M6.9 6.6 H8.1 V10.6 Q8.1 11.6 9.3 11.5" fill="none" stroke="#1c75b3" stroke-width="1.25"/><circle cx="7.8" cy="4.4" r="0.85" fill="#1c75b3"/></svg>
<span style="left:422px;top:675px;font-size:12.6px;color:#000;letter-spacing:-0.006px;-webkit-text-stroke:0.2px #000;">005</span>
<span style="left:502px;top:675px;font-size:12.6px;color:#000;letter-spacing:0.058px;-webkit-text-stroke:0.2px #000;">Dodavatel - školení 7</span>
<span style="left:705px;top:675px;font-size:12.6px;color:#000;letter-spacing:0.327px;-webkit-text-stroke:0.2px #000;">12345678</span>
<span style="left:805px;top:675px;font-size:12.6px;color:#000;letter-spacing:0.094px;-webkit-text-stroke:0.2px #000;">5. 6. 2025 12:40</span>
<span style="left:945px;top:675px;font-size:12.6px;color:#000;letter-spacing:0.025px;-webkit-text-stroke:0.2px #000;">Otevřeno</span>
<svg style="left:1177.7px;top:674.6px" width="9" height="9" viewBox="0 0 9 9" ><path d="M1 1 L8 8 M8 1 L1 8" stroke="#d3291f" stroke-width="2.1" fill="none"/></svg>
<svg style="left:1308.1px;top:674.6px" width="9" height="9" viewBox="0 0 9 9" ><path d="M1 1 L8 8 M8 1 L1 8" stroke="#d3291f" stroke-width="2.1" fill="none"/></svg>
<svg style="left:1469.4px;top:674.6px" width="9" height="9" viewBox="0 0 9 9" ><path d="M1 1 L8 8 M8 1 L1 8" stroke="#d3291f" stroke-width="2.1" fill="none"/></svg>
<div style="left:348px;top:692px;width:1222px;height:1px;background:#dcdcdc"></div>
<svg style="left:360px;top:702.4px" width="17" height="5.6" viewBox="0 0 17 5.6" ><circle cx="2.7" cy="2.8" r="1.95" fill="none" stroke="#1c75b3" stroke-width="1.3"/><circle cx="8.3" cy="2.8" r="1.95" fill="none" stroke="#1c75b3" stroke-width="1.3"/><circle cx="13.9" cy="2.8" r="1.95" fill="none" stroke="#1c75b3" stroke-width="1.3"/></svg>
<svg style="left:386px;top:696.9px" width="16" height="16" viewBox="0 0 16 16" ><circle cx="8" cy="8" r="7.25" fill="none" stroke="#1c75b3" stroke-width="1.3"/><path d="M6.9 6.6 H8.1 V10.6 Q8.1 11.6 9.3 11.5" fill="none" stroke="#1c75b3" stroke-width="1.25"/><circle cx="7.8" cy="4.4" r="0.85" fill="#1c75b3"/></svg>
<span style="left:422px;top:700px;font-size:12.6px;color:#000;letter-spacing:-0.006px;-webkit-text-stroke:0.2px #000;">006</span>
<span style="left:502px;top:700px;font-size:12.6px;color:#000;letter-spacing:0.058px;-webkit-text-stroke:0.2px #000;">Dodavatel - školení 7</span>
<span style="left:705px;top:700px;font-size:12.6px;color:#000;letter-spacing:0.327px;-webkit-text-stroke:0.2px #000;">12345678</span>
<span style="left:805px;top:700px;font-size:12.6px;color:#000;letter-spacing:0.094px;-webkit-text-stroke:0.2px #000;">5. 6. 2025 13:03</span>
<span style="left:945px;top:700px;font-size:12.6px;color:#000;letter-spacing:0.025px;-webkit-text-stroke:0.2px #000;">Otevřeno</span>
<svg style="left:1177.7px;top:699.6px" width="9" height="9" viewBox="0 0 9 9" ><path d="M1 1 L8 8 M8 1 L1 8" stroke="#d3291f" stroke-width="2.1" fill="none"/></svg>
<svg style="left:1307.5px;top:699.6px" width="11" height="9" viewBox="0 0 11 9" ><path d="M0.8 4.8 L3.9 7.8 L10.2 1" stroke="#2fb52f" stroke-width="2.1" fill="none"/></svg>
<svg style="left:1469.4px;top:699.6px" width="9" height="9" viewBox="0 0 9 9" ><path d="M1 1 L8 8 M8 1 L1 8" stroke="#d3291f" stroke-width="2.1" fill="none"/></svg>
</section>
<section>
<div style="left:330px;top:751px;width:1258px;height:400px;background:#fff;box-shadow:2px 2px 4px rgba(0,0,0,.13)"></div>
<span style="left:342px;top:767px;font-size:18px;color:#333e47;font-weight:700;letter-spacing:-0.836px;">Nabídky</span>
<div style="left:330px;top:792px;width:1258px;height:3px;background:#1d75b4"></div>
<div style="left:721.3px;top:810px;width:499px;height:29px;border:1.2px solid #ea1227"></div>
<span style="left:723.50px;top:817px;font-size:18px;color:#d0102a;">*</span>
<span style="left:731.60px;top:818px;font-size:12.6px;color:#666666;letter-spacing:0.179px;-webkit-text-stroke:0.2px #666666;">Lhůta:</span>
<div style="left:778px;top:815px;width:438px;height:21px;background:#fdf6c0;border:1px solid #e0dcb0;border-radius:3px"></div>
<span style="left:783px;top:820px;font-size:12.6px;color:#000;font-weight:700;letter-spacing:0.207px;">7. 6. 2025</span>
<div style="left:988.1px;top:816.8px;width:17.8px;height:17.2px;background:#c4d9f4;border-radius:3.5px"></div>
<svg style="left:990.6px;top:818.8px" width="12.4" height="12.4" viewBox="0 0 12.4 12.4" ><rect x="0.65" y="1.7" width="10.9" height="9.9" rx="1.1" fill="none" stroke="#2458b4" stroke-width="1.15"/><path d="M0.65 4.7 H11.55 M3.5 0.3 V2.9 M8.5 0.3 V2.9" stroke="#2458b4" stroke-width="1.15" fill="none"/></svg>
<span style="left:1011px;top:820px;font-size:12.6px;color:#000;font-weight:700;letter-spacing:0.197px;">11:00</span>
<span style="left:641.40px;top:859px;font-size:12.6px;color:#666666;letter-spacing:-0.023px;-webkit-text-stroke:0.2px #666666;">Datum a čas otevírání:</span>
<div style="left:778px;top:856px;width:438px;height:21px;background:#fff;border:1px solid #d8d8d8;border-radius:3px"></div>
<div style="left:988.1px;top:857.8px;width:17.8px;height:17.2px;background:#c4d9f4;border-radius:3.5px"></div>
<svg style="left:990.6px;top:859.8px" width="12.4" height="12.4" viewBox="0 0 12.4 12.4" ><rect x="0.65" y="1.7" width="10.9" height="9.9" rx="1.1" fill="none" stroke="#2458b4" stroke-width="1.15"/><path d="M0.65 4.7 H11.55 M3.5 0.3 V2.9 M8.5 0.3 V2.9" stroke="#2458b4" stroke-width="1.15" fill="none"/></svg>
<div style="left:778px;top:896px;width:438px;height:23px;background:#fff;border:1.2px solid #ea1227"></div>
<span style="left:906.25px;top:903px;font-size:12.6px;color:#1c75b3;letter-spacing:-0.132px;-webkit-text-stroke:0.2px #1c75b3;">Odeslání výzvy k podání nabídek</span>
<span style="left:345px;top:941px;font-size:15.3px;color:#333e47;font-weight:700;letter-spacing:-0.368px;">Přehled podaných nabídek</span>
<div style="left:345px;top:963px;width:1228px;height:166.2px;border:3px solid #dddfe2;border-bottom-width:3.8px;border-radius:11px;background:#fff"></div>
<svg style="left:355.6px;top:977.5px" width="17" height="16.5" viewBox="0 0 17 16.5" ><path d="M4.2 2.6 H1.8 Q0.7 2.6 0.7 3.7 V14.6 Q0.7 15.7 1.8 15.7 H6.6 M9.4 2.6 H11.8 Q12.9 2.6 12.9 3.7 V5.8" fill="none" stroke="#1c75b3" stroke-width="1.2"/><path d="M3.9 3.2 Q4.6 2.9 4.9 2 Q5.5 0.6 6.8 0.6 Q8.1 0.6 8.7 2 Q9 2.9 9.7 3.2" fill="none" stroke="#1c75b3" stroke-width="1.15"/><circle cx="6.8" cy="2.5" r="0.55" fill="#1c75b3"/><path d="M3.2 7.3 H4.4 M5.6 7.3 H8.2 M3.2 9.9 H4.4 M5.6 9.9 H7 M3.2 12.5 H4.4 M5.6 12.5 H6.6" stroke="#1c75b3" stroke-width="1.2"/><g transform="translate(11.8 11.1)"><path d="M0 -3.2 V-4.7" transform="rotate(0)" stroke="#1c75b3" stroke-width="2" stroke-linecap="butt"/><path d="M0 -3.2 V-4.7" transform="rotate(60)" stroke="#1c75b3" stroke-width="2" stroke-linecap="butt"/><path d="M0 -3.2 V-4.7" transform="rotate(120)" stroke="#1c75b3" stroke-width="2" stroke-linecap="butt"/><path d="M0 -3.2 V-4.7" transform="rotate(180)" stroke="#1c75b3" stroke-width="2" stroke-linecap="butt"/><path d="M0 -3.2 V-4.7" transform="rotate(240)" stroke="#1c75b3" stroke-width="2" stroke-linecap="butt"/><path d="M0 -3.2 V-4.7" transform="rotate(300)" stroke="#1c75b3" stroke-width="2" stroke-linecap="butt"/><circle r="3.1" fill="#fff" stroke="#1c75b3" stroke-width="1.15"/><circle r="1.1" fill="#1c75b3"/></g></svg>
<span style="left:376px;top:981px;font-size:12.6px;color:#1c75b3;letter-spacing:-0.085px;-webkit-text-stroke:0.2px #1c75b3;">Evidovat nabídku</span>
<div style="left:478px;top:977px;width:1.4px;height:17.8px;background:#1c75b3"></div>
<svg style="left:487px;top:977.5px" width="17" height="16.5" viewBox="0 0 17 16.5" ><path d="M4.2 2.6 H1.8 Q0.7 2.6 0.7 3.7 V14.6 Q0.7 15.7 1.8 15.7 H6.6 M9.4 2.6 H11.8 Q12.9 2.6 12.9 3.7 V5.8" fill="none" stroke="#1c75b3" stroke-width="1.2"/><path d="M3.9 3.2 Q4.6 2.9 4.9 2 Q5.5 0.6 6.8 0.6 Q8.1 0.6 8.7 2 Q9 2.9 9.7 3.2" fill="none" stroke="#1c75b3" stroke-width="1.15"/><circle cx="6.8" cy="2.5" r="0.55" fill="#1c75b3"/><path d="M3.2 7.3 H4.4 M5.6 7.3 H8.2 M3.2 9.9 H4.4 M5.6 9.9 H7 M3.2 12.5 H4.4 M5.6 12.5 H6.6" stroke="#1c75b3" stroke-width="1.2"/><circle cx="11.8" cy="11.3" r="4.1" fill="#fff" stroke="#1c75b3" stroke-width="1.15"/><path d="M9.4 11.3 H14 M12.2 9.5 L14.1 11.3 L12.2 13.1" fill="none" stroke="#1c75b3" stroke-width="1.15"/></svg>
<span style="left:507.70px;top:981px;font-size:12.6px;color:#1c75b3;letter-spacing:0.023px;-webkit-text-stroke:0.2px #1c75b3;">Zobrazit počet podání</span>
<div style="left:637px;top:977px;width:1.4px;height:17.8px;background:#1c75b3"></div>
<svg style="left:646px;top:978.1px" width="16" height="16" viewBox="0 0 16 16" ><path d="M3.6 4.4 V0.7 H12.4 V4.4" fill="none" stroke="#1c75b3" stroke-width="1.2"/><path d="M3.6 11.8 H1.8 Q0.6 11.8 0.6 10.6 V5.6 Q0.6 4.4 1.8 4.4 H14.2 Q15.4 4.4 15.4 5.6 V10.6 Q15.4 11.8 14.2 11.8 H12.4" fill="none" stroke="#1c75b3" stroke-width="1.2"/><path d="M3.6 8.4 H12.4 V15.3 H3.6 Z M5.4 10.7 H10.6 M5.4 12.9 H9.4 M2.4 6.4 H3.6" fill="none" stroke="#1c75b3" stroke-width="1.1"/></svg>
<svg style="left:666.2px;top:982.6px" width="8" height="7" viewBox="0 0 8 7" ><path d="M1.1 0.9 H6.9 L4 5.7 Z" fill="none" stroke="#1c75b3" stroke-width="1.25" stroke-linejoin="round"/></svg>
<div style="left:685px;top:977px;width:1.4px;height:17.8px;background:#1c75b3"></div>
<svg style="left:695.3px;top:977.4px" width="13" height="16.2" viewBox="0 0 13 16.2" ><path d="M4 5.4 H1.6 Q0.6 5.4 0.6 6.4 V14.6 Q0.6 15.6 1.6 15.6 H11.4 Q12.4 15.6 12.4 14.6 V6.4 Q12.4 5.4 11.4 5.4 H9" fill="none" stroke="#1c75b3" stroke-width="1.2"/><path d="M6.5 8.2 V1 M4 3.4 L6.5 0.9 L9 3.4" fill="none" stroke="#1c75b3" stroke-width="1.2" stroke-linejoin="round" stroke-linecap="round"/></svg>
<svg style="left:713.4px;top:982.6px" width="8" height="7" viewBox="0 0 8 7" ><path d="M1.1 0.9 H6.9 L4 5.7 Z" fill="none" stroke="#1c75b3" stroke-width="1.25" stroke-linejoin="round"/></svg>
<div style="left:732px;top:977px;width:1.4px;height:17.8px;background:#1c75b3"></div>
<svg style="left:1487.5px;top:977.6px" width="16.4" height="16.4" viewBox="0 0 16.4 16.4" ><path d="M1.2 0.8 H15.2 Q16.1 0.8 15.7 1.8 C14.6 5 10.2 6.2 9.8 9 V13.8 L6.6 15.4 V9 C6.2 6.2 1.8 5 0.7 1.8 Q0.3 0.8 1.2 0.8 Z" fill="none" stroke="#1c75b3" stroke-width="1.2" stroke-linejoin="round"/></svg>
<div style="left:1511px;top:977px;width:1.4px;height:17.8px;background:#1c75b3"></div>
<svg style="left:1523.3px;top:983.2px" width="8" height="7" viewBox="0 0 8 7" ><path d="M0.9 0.8 H7.1 L4 6.1 Z" fill="none" stroke="#1c75b3" stroke-width="1.3" stroke-linejoin="round"/></svg>
<span style="left:1540.40px;top:983px;font-size:12.6px;color:#1c75b3;letter-spacing:-0.394px;-webkit-text-stroke:0.2px #1c75b3;">MW</span>
<div style="left:1569px;top:977px;width:1.4px;height:17.8px;background:#1c75b3"></div>
<div style="left:348px;top:1005px;width:1222px;height:37.5px;background:#f2f2f2;border-top:1px solid #e3e3e3;border-bottom:1.3px solid #d2d2d2"></div>
<svg style="left:364.35px;top:1015.75px" width="16" height="16" viewBox="0 0 16 16" ><rect x="0.6" y="0.6" width="14.8" height="14.8" rx="1" fill="none" stroke="#444" stroke-width="1.1"/><path d="M3 5.6 H9.4 M12 5.6 H13 M3 10.4 H5 M7.6 10.4 H13" stroke="#444" stroke-width="1"/><circle cx="10.7" cy="5.6" r="1.4" fill="none" stroke="#444" stroke-width="0.9"/><circle cx="6.3" cy="10.4" r="1.4" fill="none" stroke="#444" stroke-width="0.9"/></svg>
<div style="left:395px;top:1006px;width:1px;height:35.5px;background:#d9d9d9"></div>
<span style="left:404.50px;top:1017px;font-size:12.6px;color:#000;font-weight:700;letter-spacing:-0.533px;">Číslo</span>
<svg style="left:439.1px;top:1015.5px" width="12" height="13" viewBox="0 0 12 13" ><path d="M6 12.4 V1.2 M1.2 6 L6 1 L10.8 6" fill="none" stroke="#111" stroke-width="1.3"/></svg>
<svg style="left:458.5px;top:1019px" width="8" height="7" viewBox="0 0 8 7" ><path d="M1.1 0.9 H6.9 L4 5.7 Z" fill="none" stroke="#555" stroke-width="1.25" stroke-linejoin="round"/></svg>
<div style="left:474.8px;top:1006px;width:1px;height:35.5px;background:#d9d9d9"></div>
<span style="left:484.30px;top:1017px;font-size:12.6px;color:#666666;letter-spacing:-0.021px;-webkit-text-stroke:0.2px #666666;">Název dodavatele</span>
<svg style="left:662.2px;top:1019px" width="8" height="7" viewBox="0 0 8 7" ><path d="M1.1 0.9 H6.9 L4 5.7 Z" fill="none" stroke="#555" stroke-width="1.25" stroke-linejoin="round"/></svg>
<div style="left:678.9px;top:1006px;width:1px;height:35.5px;background:#d9d9d9"></div>
<span style="left:688.40px;top:1017px;font-size:12.6px;color:#666666;letter-spacing:-0.356px;-webkit-text-stroke:0.2px #666666;">IČO</span>
<svg style="left:762px;top:1019px" width="8" height="7" viewBox="0 0 8 7" ><path d="M1.1 0.9 H6.9 L4 5.7 Z" fill="none" stroke="#555" stroke-width="1.25" stroke-linejoin="round"/></svg>
<div style="left:778.7px;top:1006px;width:1px;height:35.5px;background:#d9d9d9"></div>
<span style="left:788.20px;top:1017px;font-size:12.6px;color:#666666;letter-spacing:0.033px;-webkit-text-stroke:0.2px #666666;">Datum podání</span>
<svg style="left:912.3px;top:1019px" width="8" height="7" viewBox="0 0 8 7" ><path d="M1.1 0.9 H6.9 L4 5.7 Z" fill="none" stroke="#555" stroke-width="1.25" stroke-linejoin="round"/></svg>
<div style="left:929px;top:1006px;width:1px;height:35.5px;background:#d9d9d9"></div>
<span style="left:938.50px;top:1017px;font-size:12.6px;color:#666666;letter-spacing:0.085px;-webkit-text-stroke:0.2px #666666;">Stav</span>
<svg style="left:1062.4px;top:1019px" width="8" height="7" viewBox="0 0 8 7" ><path d="M1.1 0.9 H6.9 L4 5.7 Z" fill="none" stroke="#555" stroke-width="1.25" stroke-linejoin="round"/></svg>
<div style="left:1079.1px;top:1006px;width:1px;height:35.5px;background:#d9d9d9"></div>
<span style="left:1088.60px;top:1017px;font-size:12.6px;color:#666666;letter-spacing:0.017px;-webkit-text-stroke:0.2px #666666;">Podaná po lhůtě</span>
<svg style="left:1202.3px;top:1019px" width="8" height="7" viewBox="0 0 8 7" ><path d="M1.1 0.9 H6.9 L4 5.7 Z" fill="none" stroke="#555" stroke-width="1.25" stroke-linejoin="round"/></svg>
<div style="left:1219px;top:1006px;width:1px;height:35.5px;background:#d9d9d9"></div>
<span style="left:1228.50px;top:1017px;font-size:12.6px;color:#666666;letter-spacing:0.108px;-webkit-text-stroke:0.2px #666666;">Listinná podoba</span>
<svg style="left:1342.3px;top:1019px" width="8" height="7" viewBox="0 0 8 7" ><path d="M1.1 0.9 H6.9 L4 5.7 Z" fill="none" stroke="#555" stroke-width="1.25" stroke-linejoin="round"/></svg>
<div style="left:1359px;top:1006px;width:1px;height:35.5px;background:#d9d9d9"></div>
<span style="left:1368.50px;top:1017px;font-size:12.6px;color:#666666;letter-spacing:-0.049px;-webkit-text-stroke:0.2px #666666;">Označena jako nepodaná</span>
<svg style="left:1552.4px;top:1019px" width="8" height="7" viewBox="0 0 8 7" ><path d="M1.1 0.9 H6.9 L4 5.7 Z" fill="none" stroke="#555" stroke-width="1.25" stroke-linejoin="round"/></svg>
<div style="left:1569.2px;top:1006px;width:1px;height:35.5px;background:#d9d9d9"></div>
<svg style="left:985px;top:1069.5px" width="25.2" height="10.6" viewBox="0 0 25.2 10.6" ><path d="M0.8 2.2 Q0.8 1 2 1 H6.6 Q9 4.4 12.6 4.4 Q16.2 4.4 18.6 1 H23.2 Q24.4 1 24.4 2.2 V8.4 Q24.4 9.6 23.2 9.6 H2 Q0.8 9.6 0.8 8.4 Z" fill="none" stroke="#585858" stroke-width="1.5" stroke-linejoin="round"/></svg>
<span style="left:797px;top:1094px;font-size:12.6px;color:#666666;letter-spacing:0.130px;-webkit-text-stroke:0.2px #666666;">Seznam s podáními bude zpřístupněn až po uplynutí lhůty pro podání.</span>
</section>
</main>
</body></html>
